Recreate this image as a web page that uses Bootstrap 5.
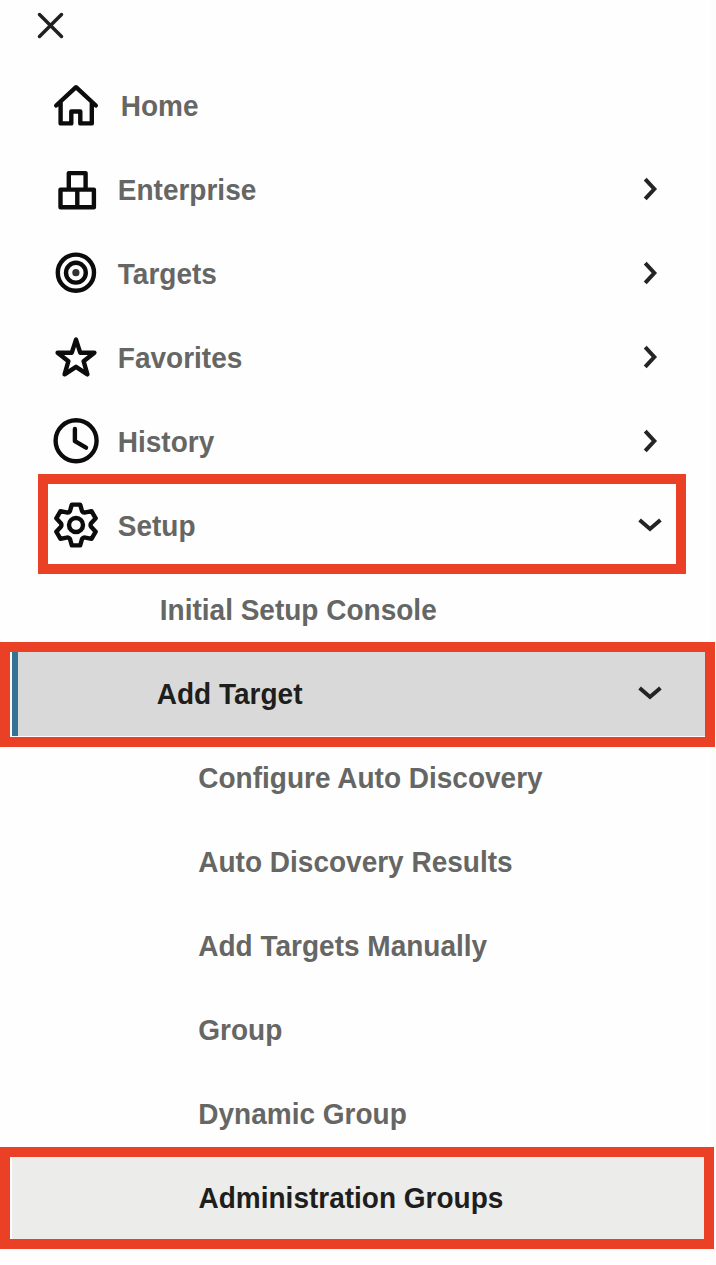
<!DOCTYPE html>
<html lang="en">
<head>
<meta charset="utf-8">
<meta name="viewport" content="width=device-width, initial-scale=1">
<title>Navigation menu</title>
<link rel="stylesheet" href="https://cdn.jsdelivr.net/npm/bootstrap@5.3.0/dist/css/bootstrap.min.css">
<style>
  body { background: #fcfcfc; font-family: "Liberation Sans", Arial, sans-serif; }
  .drawer { width: 711px; height: 1265px; background: #fefefe; }
  .drawer-top { height: 64px; padding-left: 37px; padding-top: 12px; }
  .menu-row { height: 84px; padding-left: 52px; padding-right: 49px; font-size: 28px; font-weight: 700; line-height: 84px; color: #666664; white-space: nowrap; }
  .menu-row span { display: inline-block; transform: translateY(.8px) scaleY(1.04); }
  .menu-row svg { flex: none; overflow: visible; }
  .menu-row .glyph { width: 48px; height: 48px; margin-right: 17.8px; stroke: #0c0c0c; stroke-width: 4.4; fill: none; stroke-linejoin: round; stroke-linecap: round; }
  .home-row .glyph { margin-right: 20.7px; }
  .chev { width: 24px; height: 24px; stroke: #242422; stroke-width: 4; fill: none; }
  .level-2 { padding-left: 159.8px; }
  .level-3 { padding-left: 198.3px; }
  .active-group { padding-left: 0; color: #1e1e1d; }
  .active-group .fill { margin-left: 12px; margin-right: -49px; padding-right: 49px; padding-left: 138.8px; border-left: 6px solid #357395; background: #d9d9d9; height: 84px; }
  .current { padding-left: 0; color: #1e1e1d; }
  .current .fill { margin-left: 12px; margin-right: -49px; padding-left: 186.5px; background: #ececea; height: 84px; }
  .callout { border: 10px solid #ea4025; pointer-events: none; }
  .callout-setup { left: 38px; top: -10px; width: 648px; height: 100px; }
  .callout-add { left: 0; top: -10px; width: 715px; height: 105px; z-index: 1; }
  .callout-admin { left: 0; top: -9px; width: 714px; height: 102px; z-index: 1; }
</style>
</head>
<body class="overflow-hidden">
<nav class="drawer">
  <div class="drawer-top">
    <svg class="d-block" width="27" height="27" viewBox="0 0 27 27" fill="none" stroke="#20201e" stroke-width="3.5" stroke-linecap="round" role="img" aria-label="Close"><path d="M2.5 2.5 24.5 24.5M24.5 2.5 2.5 24.5"/></svg>
  </div>
  <ul class="list-unstyled mb-0">
    <li class="menu-row home-row d-flex align-items-center">
      <svg class="glyph" viewBox="0 0 48 48"><path d="M4.2 23.5 24 5.2 43.8 23.5M8.6 20.5V41.4H19.3V29.5H28.3V41.4H39.8V20.5"/></svg>
      <span>Home</span>
    </li>
    <li class="menu-row d-flex align-items-center">
      <svg class="glyph" viewBox="0 0 48 48"><path d="M16.8 23V7.1H33.6V23M8.5 23.6H41.9V41.2H8.5ZM25.3 23.6V41.2"/></svg>
      <span>Enterprise</span>
      <svg class="chev ms-auto" viewBox="0 0 24 24"><path d="M7.2 1.2 16.3 11 7.2 20.8"/></svg>
    </li>
    <li class="menu-row d-flex align-items-center">
      <svg class="glyph" viewBox="0 0 48 48"><circle cx="23.9" cy="22.7" r="18.1"/><circle cx="23.9" cy="22.7" r="9.9"/><circle cx="23.9" cy="22.7" r="3.6" fill="#333" stroke="none"/></svg>
      <span>Targets</span>
      <svg class="chev ms-auto" viewBox="0 0 24 24"><path d="M7.2 1.2 16.3 11 7.2 20.8"/></svg>
    </li>
    <li class="menu-row d-flex align-items-center">
      <svg class="glyph" viewBox="0 0 48 48"><path d="M24 5.6 19.8 18.7H5.6L16.4 27.2 12.6 40.4 24 32.8 35.4 40.4 31.6 27.2 42.4 18.7H28.2Z"/></svg>
      <span>Favorites</span>
      <svg class="chev ms-auto" viewBox="0 0 24 24"><path d="M7.2 1.2 16.3 11 7.2 20.8"/></svg>
    </li>
    <li class="menu-row d-flex align-items-center">
      <svg class="glyph" viewBox="0 0 48 48"><circle cx="24.1" cy="22.8" r="20.5"/><path d="M22.9 11V23.2L34 29.6"/></svg>
      <span>History</span>
      <svg class="chev ms-auto" viewBox="0 0 24 24"><path d="M7.2 1.2 16.3 11 7.2 20.8"/></svg>
    </li>
    <li class="menu-row d-flex align-items-center position-relative">
      <svg class="glyph" viewBox="0 0 48 48"><path d="M19.8 2.6H28.2L30 9Q31.2 11 33.5 10.3L39.5 9.2 43.7 16.3 39.1 21.2Q38 23 39.1 24.8L43.7 29.7 39.5 36.8 33.5 35.7Q31.2 35 30 37L28.2 43.4H19.8L18 37Q16.8 35 14.5 35.7L8.5 36.8 4.3 29.7 8.9 24.8Q10 23 8.9 21.2L4.3 16.3 8.5 9.2 14.5 10.3Q16.8 11 18 9Z"/><circle cx="24" cy="23" r="7"/></svg>
      <span>Setup</span>
      <svg class="chev ms-auto" viewBox="0 0 24 24"><path d="M1.6 6 12 14.9 22.4 6"/></svg>
      <div class="callout callout-setup position-absolute"></div>
    </li>
    <li class="menu-row level-2"><span>Initial Setup Console</span></li>
    <li class="menu-row active-group position-relative">
      <div class="fill d-flex align-items-center">
        <span>Add Target</span>
        <svg class="chev ms-auto" viewBox="0 0 24 24"><path d="M1.6 6 12 14.9 22.4 6"/></svg>
      </div>
      <div class="callout callout-add position-absolute"></div>
    </li>
    <li class="menu-row level-3"><span>Configure Auto Discovery</span></li>
    <li class="menu-row level-3"><span>Auto Discovery Results</span></li>
    <li class="menu-row level-3"><span>Add Targets Manually</span></li>
    <li class="menu-row level-3"><span>Group</span></li>
    <li class="menu-row level-3"><span>Dynamic Group</span></li>
    <li class="menu-row current position-relative">
      <div class="fill"><span>Administration Groups</span></div>
      <div class="callout callout-admin position-absolute"></div>
    </li>
  </ul>
</nav>
<script src="https://cdn.jsdelivr.net/npm/bootstrap@5.3.0/dist/js/bootstrap.bundle.min.js"></script>
</body>
</html>
